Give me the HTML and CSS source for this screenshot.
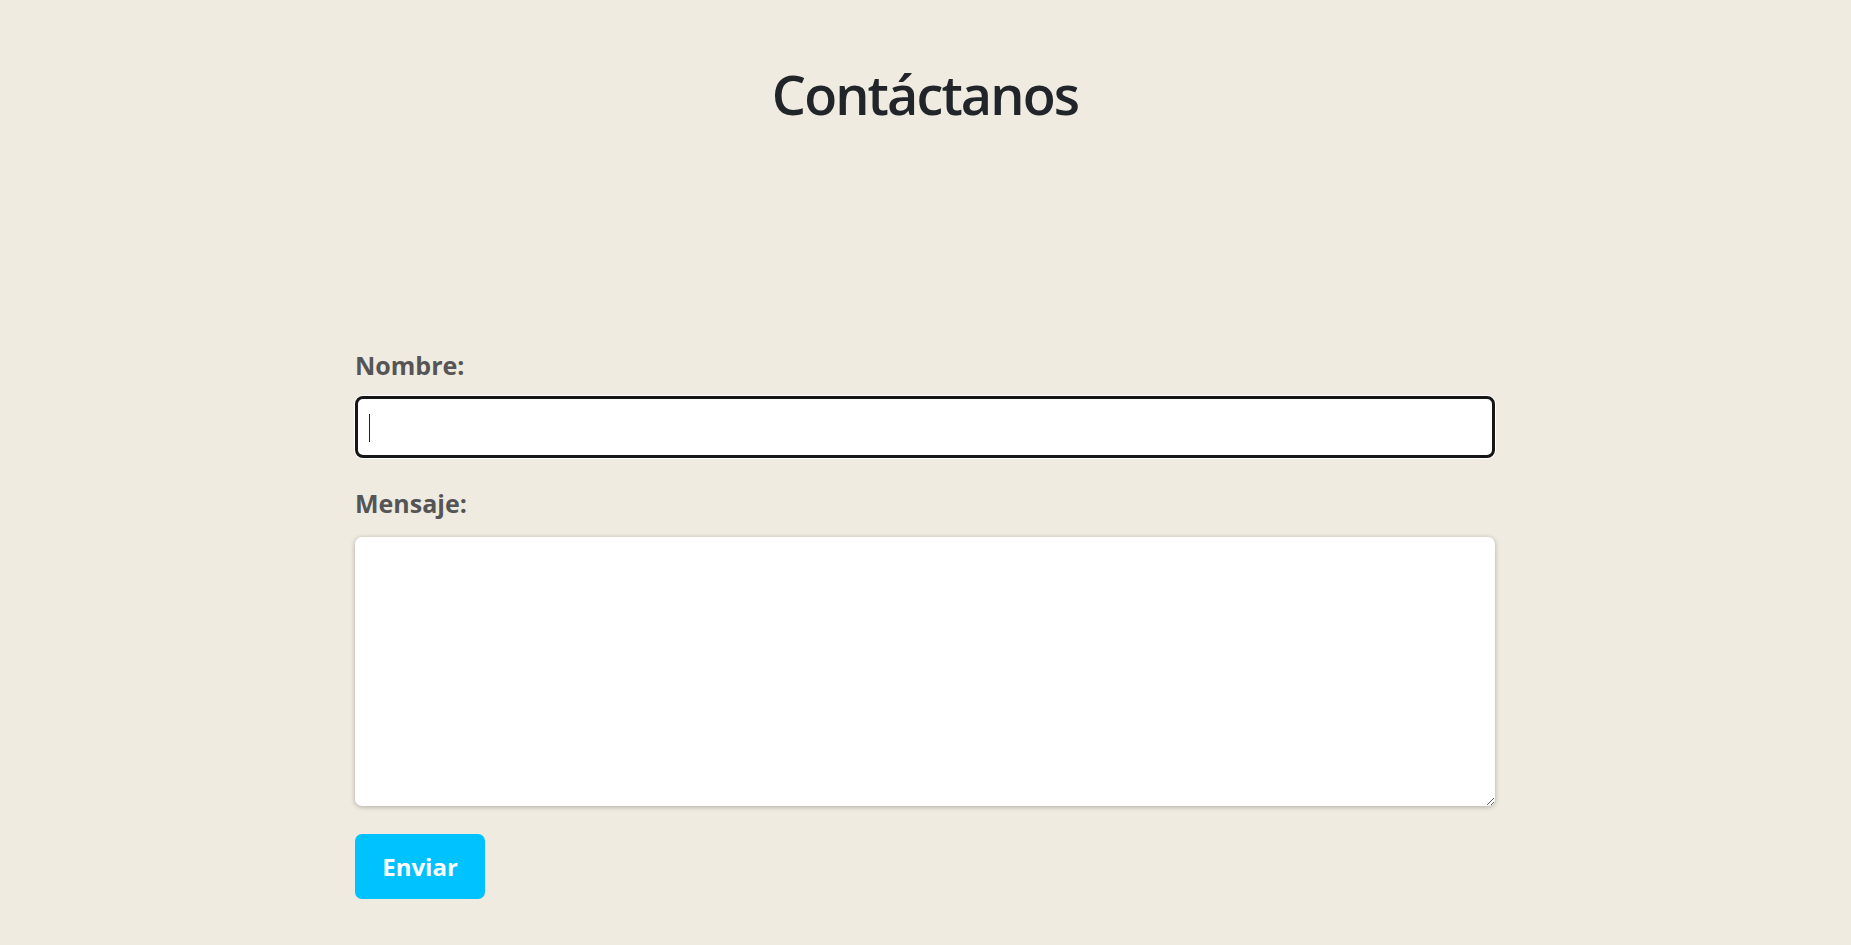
FILE: index.html
```html
<!DOCTYPE html>
<html lang="es">
<head>
<meta charset="utf-8">
<title>Contáctanos</title>
<link rel="stylesheet" href="styles.css">
</head>
<body>
<main class="container">
  <h1 class="title">Contáctanos</h1>
  <form class="contact-form">
    <label class="field-label" for="nombre">Nombre:</label>
    <div class="input-wrap">
      <input class="field-input is-focused" type="text" id="nombre" name="nombre">
    </div>
    <label class="field-label field-label-second" for="mensaje">Mensaje:</label>
    <textarea class="field-textarea" id="mensaje" name="mensaje"></textarea>
    <div class="actions">
      <button class="btn-submit" type="submit">Enviar</button>
    </div>
  </form>
</main>
</body>
</html>
```

FILE: styles.css
```css
html, body {
  margin: 0;
  padding: 0;
}

body {
  background: #efebe0;
  font-family: "Open Sans", "Noto Sans", "Liberation Sans", sans-serif;
  color: #212529;
  min-height: 945px;
}

.container {
  width: 1140px;
  margin: 0 0 0 355px;
}

.title {
  margin: 61px 0 0;
  font-size: 54px;
  line-height: 66px;
  font-weight: 600;
  letter-spacing: -1.9px;
  text-align: center;
  color: #212529;
}

.contact-form {
  margin-top: 223px;
  display: flex;
  flex-direction: column;
  align-items: stretch;
}

.field-label {
  display: block;
  font-size: 25px;
  line-height: 30px;
  font-weight: 700;
  color: #555555;
}

.input-wrap {
  position: relative;
  margin-top: 16px;
}

.input-wrap::after {
  content: "";
  position: absolute;
  left: 14px;
  top: 18px;
  width: 1px;
  height: 28px;
  background: #222;
}

.field-input {
  display: block;
  box-sizing: border-box;
  width: 1140px;
  height: 62px;
  margin: 0;
  padding: 0 12px;
  background: #fff;
  border: 3px solid #161616;
  border-radius: 8px;
  font-family: inherit;
  font-size: 20px;
  outline: none;
}

.field-input.is-focused {
  box-shadow: 0 0 0 1px #ffffff;
}

.field-label-second {
  margin-top: 30px;
}

.field-textarea {
  display: block;
  box-sizing: border-box;
  width: 1140px;
  height: 269px;
  margin: 19px 0 0;
  padding: 10px 12px;
  background: #fff;
  border: none;
  border-radius: 7px;
  box-shadow: 0 1px 5px rgba(0, 0, 0, 0.28);
  font-family: inherit;
  font-size: 20px;
  outline: none;
}

.actions {
  margin-top: 28px;
  display: flex;
}

.btn-submit {
  height: 65px;
  width: 130px;
  padding: 0;
  border: none;
  border-radius: 7px;
  background: #00c2ff;
  color: #ffffff;
  font-family: inherit;
  font-size: 24px;
  font-weight: 700;
  cursor: pointer;
}
```
